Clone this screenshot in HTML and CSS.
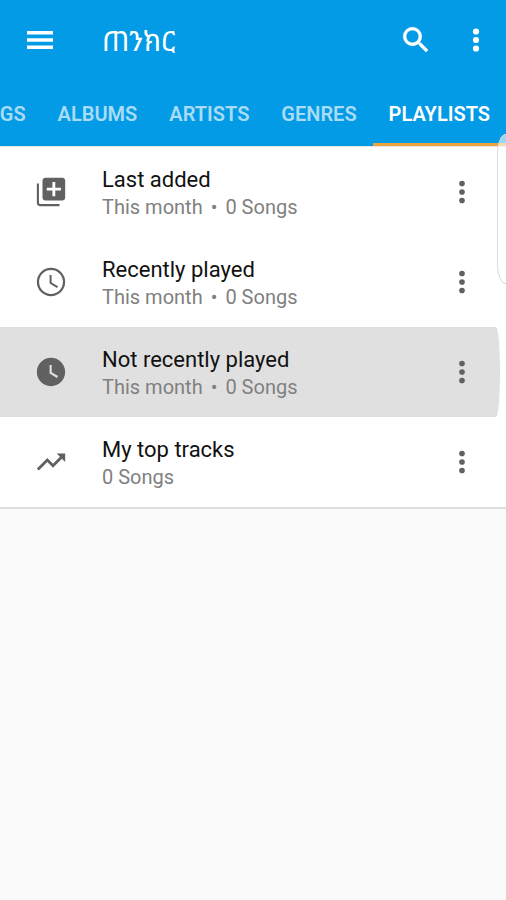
FILE: index.html
```
<!DOCTYPE html>
<html lang="en">
<head>
    <meta charset="utf-8">
    <meta name="viewport" content="width=device-width, initial-scale=1">
    <title>Playlists</title>
    <link rel="stylesheet" href="styles.css">
</head>

<body>
    <header class="header">
        <div class="toolbar">
            <button class="icon-btn" type="button" aria-label="Menu">
                <svg width="36" height="36" viewBox="0 0 36 36"><path d="M5 9h26v3.600H5zM5 16.200h26v3.600H5zM5 23.400h26v3.600H5z"/></svg>
            </button>
            <h1 class="title" lang="am">ጠንክር</h1>
            <button class="icon-btn" type="button" aria-label="Search">
                <svg width="34" height="34" viewBox="0 0 24 24"><path stroke="currentColor" stroke-width=".4" d="M15.500 14h-.79l-.28-.27A6.471 6.471 0 0 0 16 9.500 6.500 6.500 0 1 0 9.500 16c1.610 0 3.090-.59 4.230-1.570l.27.28v.79l5 4.990L20.490 19l-4.990-5zm-6 0C7.010 14 5 11.990 5 9.500S7.010 5 9.500 5 14 7.010 14 9.500 11.990 14 9.500 14z"/></svg>
            </button>
            <button class="icon-btn" type="button" aria-label="More options">
                <svg width="34" height="34" viewBox="0 0 24 24"><circle cx="12" cy="6" r="2.200"/><circle cx="12" cy="12" r="2.200"/><circle cx="12" cy="18" r="2.200"/></svg>
            </button>
        </div>
        <nav class="tabs">
            <a class="tab" href="#songs">SONGS</a>
            <a class="tab" href="#albums">ALBUMS</a>
            <a class="tab" href="#artists">ARTISTS</a>
            <a class="tab" href="#genres">GENRES</a>
            <a class="tab active" href="#playlists" aria-current="page">PLAYLISTS</a>
        </nav>
    </header>

    <!-- edge panel handle -->
    <div class="edge-panel"></div>

    <main>
        <ul class="list">
            <li class="row">
                <svg class="row-icon" width="34" height="34" viewBox="0 0 24 24"><path d="M3.500 6H2v14c0 1.100.9 2 2 2h14v-1.500H4.500c-.6 0-1-.4-1-1V6zM20 2H8c-1.100 0-2 .9-2 2v12c0 1.100.9 2 2 2h12c1.100 0 2-.9 2-2V4c0-1.100-.9-2-2-2zm-1 9h-4v4h-2v-4H9V9h4V5h2v4h4v2z"/></svg>
                <div class="text">
                    <h2>Last added</h2>
                    <p>This month<span class="dot">•</span>0 Songs</p>
                </div>
                <button class="icon-btn" type="button" aria-label="Last added options">
                    <svg width="34" height="34" viewBox="0 0 24 24"><circle cx="12" cy="6" r="2"/><circle cx="12" cy="12" r="2"/><circle cx="12" cy="18" r="2"/></svg>
                </button>
            </li>
            <li class="row">
                <svg class="row-icon" width="34" height="34" viewBox="0 0 24 24"><path d="M12 2a10 10 0 1 0 0 20 10 10 0 0 0 0-20zm0 18.400a8.400 8.400 0 1 1 0-16.800 8.400 8.400 0 0 1 0 16.800zM12.400 7H11v6l5.200 3.200.8-1.200-4.600-2.700z"/></svg>
                <div class="text">
                    <h2>Recently played</h2>
                    <p>This month<span class="dot">•</span>0 Songs</p>
                </div>
                <button class="icon-btn" type="button" aria-label="Recently played options">
                    <svg width="34" height="34" viewBox="0 0 24 24"><circle cx="12" cy="6" r="2"/><circle cx="12" cy="12" r="2"/><circle cx="12" cy="18" r="2"/></svg>
                </button>
            </li>
            <li class="row pressed">
                <svg class="row-icon" width="34" height="34" viewBox="0 0 24 24"><path d="M12 2C6.500 2 2 6.500 2 12s4.500 10 10 10 10-4.500 10-10S17.500 2 12 2zm4.200 14.200L11 13V7h1.500v5.200l4.500 2.700-.8 1.300z"/></svg>
                <div class="text">
                    <h2>Not recently played</h2>
                    <p>This month<span class="dot">•</span>0 Songs</p>
                </div>
                <button class="icon-btn" type="button" aria-label="Not recently played options">
                    <svg width="34" height="34" viewBox="0 0 24 24"><circle cx="12" cy="6" r="2"/><circle cx="12" cy="12" r="2"/><circle cx="12" cy="18" r="2"/></svg>
                </button>
            </li>
            <li class="row">
                <svg class="row-icon" width="34" height="34" viewBox="0 0 24 24"><path d="M16 6l2.290 2.290-4.880 4.880-4-4L2 16.590 3.410 18l6-6 4 4 6.300-6.290L22 12V6z"/></svg>
                <div class="text">
                    <h2>My top tracks</h2>
                    <p>0 Songs</p>
                </div>
                <button class="icon-btn" type="button" aria-label="My top tracks options">
                    <svg width="34" height="34" viewBox="0 0 24 24"><circle cx="12" cy="6" r="2"/><circle cx="12" cy="12" r="2"/><circle cx="12" cy="18" r="2"/></svg>
                </button>
            </li>
        </ul>
    </main>
</body>

</html>
```
FILE: styles.css
```
* {
    box-sizing: border-box;
}

body {
    margin: 0;
    background-color: #fafafa;
    font-family: Roboto, "Noto Sans", sans-serif;
}

svg {
    display: block;
    fill: currentColor;
}

.header {
    background-color: #039be5;
    color: white;
}

.toolbar {
    display: flex;
    align-items: center;
    height: 80px;
    padding-left: 10px;
}

.icon-btn {
    display: flex;
    align-items: center;
    justify-content: center;
    flex: none;
    width: 60px;
    height: 60px;
    padding: 0;
    border: none;
    background: none;
    color: inherit;
}

.title {
    flex: 1;
    margin: 0;
    padding-left: 32px;
    font-family: "Noto Sans Ethiopic", "DejaVu Sans", Roboto, sans-serif;
    font-size: 28px;
    font-weight: 400;
}

.tabs {
    display: flex;
    justify-content: flex-end;
    height: 66px;
    overflow: hidden;
}

.tab {
    flex: none;
    padding: 0 16px;
    border-bottom: 3px solid transparent;
    color: #a8dcf7;
    font-size: 20px;
    font-weight: 600;
    line-height: 68px;
    text-decoration: none;
}

.tab.active {
    border-bottom-color: #e8a33d;
    color: white;
}

.edge-panel {
    position: absolute;
    top: 134px;
    right: 0;
    width: 9px;
    height: 150px;
    border: 1px solid #dcdcdc;
    border-right: none;
    border-radius: 9px 0 0 9px / 20px 0 0 20px;
    background-color: rgba(255, 255, 255, 0.6);
}

.list {
    margin: 0;
    padding: 0;
    border-top: 1px solid #e4e4e4;
    border-bottom: 2px solid #dcdcdc;
    background-color: white;
    list-style: none;
}

.row {
    display: flex;
    align-items: center;
    height: 90px;
    padding: 0 14px 0 34px;
    color: #616161;
}

/* touch ripple spreading to the right edge */
.row.pressed {
    margin-right: 6px;
    padding-right: 8px;
    border-radius: 0 4px 4px 0 / 0 45px 45px 0;
    background-color: #e0e0e0;
}

.row-icon {
    flex: none;
}

.text {
    flex: 1;
    padding-left: 34px;
}

.text h2 {
    margin: 0;
    color: #111;
    font-size: 22px;
    font-weight: 400;
    line-height: 30px;
}

.text p {
    margin: 0;
    color: #808080;
    font-size: 20px;
    line-height: 24px;
}

.dot {
    margin: 0 8px;
}
```
